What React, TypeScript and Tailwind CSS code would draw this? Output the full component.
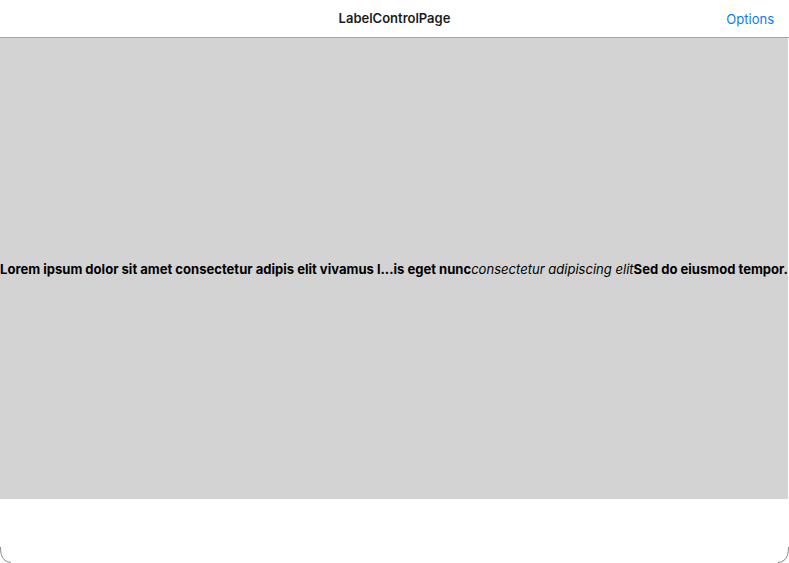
export default function App() {
  return (
    <div
      className="relative flex h-[563px] w-[789px] flex-col overflow-hidden bg-white"
      style={{ fontFamily: "Inter, 'Liberation Sans', sans-serif" }}
    >
      <div className="relative flex h-[38px] shrink-0 items-center justify-center border-b border-[#a7a7a7] bg-white">
        <span className="text-[13px] font-semibold text-[#1c1c1c]">LabelControlPage</span>
        <span className="absolute right-[15px] top-[10px] text-[13px] text-[#0a7aff]">Options</span>
      </div>
      <div className="flex h-[461px] w-[788px] shrink-0 items-center justify-center bg-[#d3d3d3]">
        <p className="whitespace-nowrap pt-[2px] text-[13.05px] text-black">
          <span className="font-bold">Lorem ipsum dolor sit amet consectetur adipis elit vivamus l...is eget nunc</span>
          <span className="italic">consectetur adipiscing elit</span>
          <span className="font-bold">Sed do eiusmod tempor.</span>
        </p>
      </div>
      <div className="flex-1 bg-white" />
      {/* rounded screen corners */}
      <svg className="absolute bottom-0 left-0" width="14" height="16" viewBox="0 0 14 16">
        <path d="M0.5 0 Q0.5 9 4 12.5 Q7 15.5 11 15.5" fill="none" stroke="#8a8a8a" strokeWidth="1" />
      </svg>
      <svg className="absolute bottom-0 right-0" width="14" height="16" viewBox="0 0 14 16">
        <path d="M13.5 0 Q13.5 9 10 12.5 Q7 15.5 3 15.5" fill="none" stroke="#8a8a8a" strokeWidth="1" />
      </svg>
    </div>
  );
}
